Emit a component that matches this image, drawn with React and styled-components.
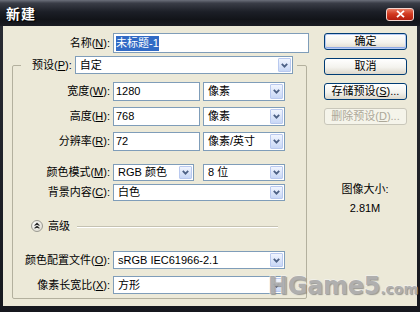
import React from 'react'
import styled, { createGlobalStyle } from 'styled-components'

const GlobalStyle = createGlobalStyle`
  html, body {
    margin: 0;
    padding: 0;
    background: #1d1f26;
  }
  body {
    font-family: "Liberation Sans", "Noto Sans CJK SC", sans-serif;
    font-size: 11px;
    color: #000;
  }
`

const Window = styled.div`
  position: relative;
  width: 420px;
  height: 312px;
  display: flex;
  flex-direction: column;
  overflow: hidden;
  background: linear-gradient(to bottom, #2a2d35, #16181e);
`

const TitleBar = styled.div`
  height: 26px;
  flex: none;
  display: flex;
  align-items: center;
  justify-content: space-between;
  padding: 0 6px;
  background: linear-gradient(to bottom, #6c707b 0%, #3a3d47 12%, #1c1f27 45%, #121419 75%, #1a1c23 100%);
`

const Title = styled.div`
  color: #fff;
  font: bold 14px "Noto Sans CJK SC", sans-serif;
  line-height: 16px;
  letter-spacing: 1px;
  text-shadow: 1px 1px 1px #000;
`

const CloseButton = styled.div`
  width: 28px;
  height: 13px;
  margin-top: 2px;
  box-sizing: border-box;
  border: 1px solid #f2d6cf;
  border-radius: 3px;
  background: linear-gradient(to bottom, #ea7b62 0%, #d23a20 45%, #b41e0e 100%);
  display: flex;
  align-items: center;
  justify-content: center;
`

const Body = styled.div`
  flex: 1;
  display: flex;
  margin: 0 3px 6px 3px;
  background: #ece9d8;
`

const LeftCol = styled.div`
  width: 310px;
  flex: none;
  padding-top: 7px;
`

const NameRow = styled.div`
  display: grid;
  grid-template-columns: 107px 196px;
  column-gap: 3px;
  align-items: center;
`

const Label = styled.div`
  text-align: right;
  white-space: nowrap;
  line-height: 13px;
`

const TextBox = styled.div`
  box-sizing: border-box;
  width: ${p => p.$w}px;
  height: ${p => p.$h || 19}px;
  border: 1px solid #7f9db9;
  background: #fff;
  padding: 0 2px;
  display: flex;
  align-items: center;
  line-height: 13px;
  white-space: nowrap;
  overflow: hidden;
`

const Selected = styled.span`
  background: #316ac5;
  color: #fff;
  padding: 1px 0;
`

const SelectBox = styled.div`
  box-sizing: border-box;
  width: ${p => p.$w}px;
  height: ${p => p.$h || 18}px;
  border: 1px solid #7f9db9;
  background: #fff;
  display: flex;
  align-items: center;
  padding: 1px;
`

const SelectText = styled.div`
  flex: 1;
  padding-left: 3px;
  line-height: 13px;
  white-space: nowrap;
  overflow: hidden;
`

const ArrowButton = styled.div`
  box-sizing: border-box;
  width: 13px;
  align-self: stretch;
  border: 1px solid #b9c9ef;
  border-radius: 1px;
  background: linear-gradient(to bottom, #f1f5fe, #c8d7f6);
  display: flex;
  align-items: center;
  justify-content: center;
`

const Group = styled.fieldset`
  box-sizing: border-box;
  width: 295px;
  min-width: 0;
  margin: 3px 0 0 9px;
  padding: 0 0 4px 0;
  border: 1px solid #b3b09e;
  border-radius: 2px;
`

const Legend = styled.legend`
  margin-left: 8px;
  padding: 0 4px 0 11px;
  display: flex;
  align-items: center;
  gap: 3px;
`

const Row = styled.div`
  display: grid;
  grid-template-columns: 97px auto;
  column-gap: 3px;
  align-items: center;
  margin-top: ${p => p.$mt}px;
`

const Controls = styled.div`
  display: flex;
  align-items: center;
  gap: ${p => p.$gap || 3}px;
`

const AdvancedRow = styled.div`
  display: flex;
  align-items: center;
  height: 14px;
  margin-top: 18px;
  padding-left: 18px;
`

const AdvancedText = styled.span`
  margin-left: 5px;
  line-height: 13px;
`

const Rule = styled.div`
  flex: 1;
  height: 1px;
  margin: 0 28px 0 7px;
  background: #c5c2b2;
  box-shadow: 0 1px 0 #fff;
`

const RightCol = styled.div`
  flex: 1;
  display: flex;
  flex-direction: column;
  padding-top: 7px;
`

const Button = styled.button`
  box-sizing: border-box;
  width: 83px;
  height: 17px;
  margin: 0 0 8px 11px;
  padding: 0;
  font: 11px "Liberation Sans", "Noto Sans CJK SC", sans-serif;
  line-height: 13px;
  color: ${p => (p.$disabled ? '#aca899' : '#000')};
  border: 1px solid ${p => (p.$disabled ? '#c9c7ba' : '#003c74')};
  border-radius: 3px;
  background: ${p =>
    p.$disabled
      ? '#f5f4ea'
      : 'linear-gradient(to bottom, #ffffff 0%, #f4f3ee 55%, #dcd7cb 100%)'};
  box-shadow: ${p => (p.$default ? 'inset 0 0 0 1px #b8cbf3, inset 0 -1px 0 1px #8fa9e6' : 'none')};
`

const ImageInfo = styled.div`
  margin-top: 49px;
  text-align: center;
  line-height: 14px;
`

const InfoValue = styled.div`
  margin-top: 5px;
`

const Watermark = styled.div`
  position: absolute;
  left: 268px;
  top: 272px;
  display: flex;
  align-items: baseline;
  font-family: "DejaVu Sans", sans-serif;
  font-weight: bold;
  color: #ababab;
  -webkit-text-stroke: 1.2px #f6f6f6;
  paint-order: stroke fill;
  text-shadow: 1px 1px 1px rgba(0, 0, 0, 0.4);
  opacity: 0.92;
`

const MarkBig = styled.span`
  font-size: 24px;
  letter-spacing: -0.3px;
`

const MarkSmall = styled.span`
  font-size: 14px;
`

const Chevron = () => (
  <svg width="7" height="5" viewBox="0 0 7 5">
    <path d="M0.8 0.8 L3.5 3.6 L6.2 0.8" fill="none" stroke="#4d6185" strokeWidth="1.8" />
  </svg>
)

const Select = ({ w, h, children }) => (
  <SelectBox $w={w} $h={h}>
    <SelectText>{children}</SelectText>
    <ArrowButton>
      <Chevron />
    </ArrowButton>
  </SelectBox>
)

const CollapseIcon = () => (
  <svg width="12" height="12" viewBox="0 0 12 12">
    <defs>
      <radialGradient id="cg" cx="40%" cy="35%" r="70%">
        <stop offset="0%" stopColor="#ffffff" />
        <stop offset="100%" stopColor="#dedbd0" />
      </radialGradient>
    </defs>
    <circle cx="6" cy="6" r="5.5" fill="url(#cg)" stroke="#9b9a92" />
    <path d="M3.6 5.6 L6 3.4 L8.4 5.6 M3.6 8.4 L6 6.2 L8.4 8.4" fill="none" stroke="#2b2b2b" strokeWidth="1.2" />
  </svg>
)

export default function App() {
  return (
    <Window>
      <GlobalStyle />
      <TitleBar>
        <Title>新建</Title>
        <CloseButton>
          <svg width="9" height="8" viewBox="0 0 9 8">
            <path d="M1 0.8 L8 7.2 M8 0.8 L1 7.2" stroke="#fff" strokeWidth="1.8" />
          </svg>
        </CloseButton>
      </TitleBar>
      <Body>
        <LeftCol>
          <NameRow>
            <Label>名称(<u>N</u>):</Label>
            <TextBox $w={196} $h={20}>
              <Selected>未标题-1</Selected>
            </TextBox>
          </NameRow>
          <Group>
            <Legend>
              <Label>预设(<u>P</u>):</Label>
              <Select w={218}>自定</Select>
            </Legend>
            <Row $mt={8}>
              <Label>宽度(<u>W</u>):</Label>
              <Controls>
                <TextBox $w={87}>1280</TextBox>
                <Select w={82} h={19}>像素</Select>
              </Controls>
            </Row>
            <Row $mt={6}>
              <Label>高度(<u>H</u>):</Label>
              <Controls>
                <TextBox $w={87}>768</TextBox>
                <Select w={82} h={19}>像素</Select>
              </Controls>
            </Row>
            <Row $mt={6}>
              <Label>分辨率(<u>R</u>):</Label>
              <Controls>
                <TextBox $w={87}>72</TextBox>
                <Select w={82} h={19}>像素/英寸</Select>
              </Controls>
            </Row>
            <Row $mt={13}>
              <Label>颜色模式(<u>M</u>):</Label>
              <Controls $gap={9}>
                <Select w={81} h={17}>RGB 颜色</Select>
                <Select w={82} h={17}>8 位</Select>
              </Controls>
            </Row>
            <Row $mt={3}>
              <Label>背景内容(<u>C</u>):</Label>
              <Select w={172} h={17}>白色</Select>
            </Row>
            <AdvancedRow>
              <CollapseIcon />
              <AdvancedText>高级</AdvancedText>
              <Rule />
            </AdvancedRow>
            <Row $mt={18}>
              <Label>颜色配置文件(<u>O</u>):</Label>
              <Select w={172}>sRGB IEC61966-2.1</Select>
            </Row>
            <Row $mt={7}>
              <Label>像素长宽比(<u>X</u>):</Label>
              <Select w={172}>方形</Select>
            </Row>
          </Group>
        </LeftCol>
        <RightCol>
          <Button $default>确定</Button>
          <Button>取消</Button>
          <Button>存储预设(<u>S</u>)...</Button>
          <Button $disabled>删除预设(<u>D</u>)...</Button>
          <ImageInfo>
            <div>图像大小:</div>
            <InfoValue>2.81M</InfoValue>
          </ImageInfo>
        </RightCol>
      </Body>
      <Watermark>
        <MarkBig>HGame5</MarkBig>
        <MarkSmall>.com</MarkSmall>
      </Watermark>
    </Window>
  )
}
